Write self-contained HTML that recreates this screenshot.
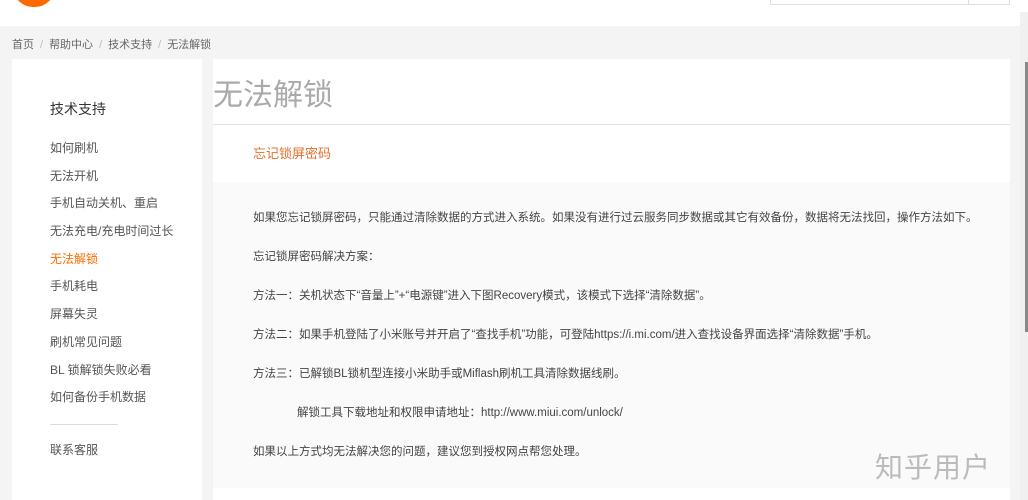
<!DOCTYPE html>
<html><head><meta charset="utf-8"><style>
*{margin:0;padding:0;box-sizing:border-box}
body{width:1028px;height:500px;overflow:hidden;background:#f4f4f4;font-family:"Liberation Sans","Noto Sans CJK SC",sans-serif;position:relative;color:#333}
.hdr{position:absolute;left:0;top:0;width:1028px;height:26px;background:#fff}
.logo{position:absolute;left:13px;top:-20px;width:42px;height:27px;background:#ff6a00;border-radius:0 0 20px 20px}
.search{position:absolute;left:770px;top:-2px;width:240px;height:7px;border:1px solid #ddd;border-top:none}
.search i{position:absolute;left:197px;top:0;width:1px;height:6px;background:#ddd}
.bc{position:absolute;left:12px;top:36px;font-size:11px;color:#666}
.bc span{color:#bbb;margin:0 6px}
.side{position:absolute;left:12px;top:59px;width:190px;height:441px;background:#fff}
.side h3{position:absolute;left:38px;top:40px;font-size:14px;font-weight:normal;color:#333}
.side ul{position:absolute;left:38px;top:80px;list-style:none;font-size:12px;color:#555}
.side li{height:27.7px;line-height:19px}
.side li.on{color:#ff6a00}
.sep{position:absolute;left:50px;top:424px;width:68px;height:1px;background:#ddd}
.contact{position:absolute;left:50px;top:441px;font-size:12px;color:#555}
.main{position:absolute;left:213px;top:59px;width:797px;height:441px;background:#fff}
.title{position:absolute;left:0;top:11px;font-size:30px;color:#aaa;font-weight:normal}
.line{position:absolute;left:0;top:65px;width:797px;height:1px;background:#e0e0e0}
.sub{position:absolute;left:40px;top:84px;font-size:13px;color:#e0702a}
.body{position:absolute;left:0;top:123px;width:797px;height:306px;background:#fafafa}
.body p{position:absolute;left:40px;font-size:11.5px;color:#444;white-space:nowrap}
.wm{position:absolute;left:875px;top:446px;font-size:28px;color:#bbb;letter-spacing:1px}
.sb{position:absolute;left:1020px;top:12px;width:8px;height:488px;background:#f0f0f0}
.sb i{position:absolute;left:5px;top:50px;width:3px;height:270px;background:#888}
</style></head><body>
<div class="hdr"><div class="logo"></div><div class="search"><i></i></div></div>
<div class="bc">首页<span>/</span>帮助中心<span>/</span>技术支持<span>/</span>无法解锁</div>
<div class="side"><h3>技术支持</h3>
<ul><li>如何刷机</li><li>无法开机</li><li>手机自动关机、重启</li><li>无法充电/充电时间过长</li><li class="on">无法解锁</li><li>手机耗电</li><li>屏幕失灵</li><li>刷机常见问题</li><li>BL 锁解锁失败必看</li><li>如何备份手机数据</li></ul>
</div>
<div class="sep"></div><div class="contact">联系客服</div>
<div class="main">
<div class="title">无法解锁</div><div class="line"></div>
<div class="sub">忘记锁屏密码</div>
<div class="body">
<p style="top:27px">如果您忘记锁屏密码，只能通过清除数据的方式进入系统。如果没有进行过云服务同步数据或其它有效备份，数据将无法找回，操作方法如下。</p>
<p style="top:66px">忘记锁屏密码解决方案：</p>
<p style="top:105px">方法一：关机状态下“音量上”+“电源键”进入下图Recovery模式，该模式下选择“清除数据”。</p>
<p style="top:144px">方法二：如果手机登陆了小米账号并开启了“查找手机”功能，可登陆https://i.mi.com/进入查找设备界面选择“清除数据”手机。</p>
<p style="top:183px">方法三：已解锁BL锁机型连接小米助手或Miflash刷机工具清除数据线刷。</p>
<p style="top:222px;left:84px">解锁工具下载地址和权限申请地址：http://www.miui.com/unlock/</p>
<p style="top:261px">如果以上方式均无法解决您的问题，建议您到授权网点帮您处理。</p>
</div>
</div>
<div class="wm">知乎用户</div>
<div class="sb"><i></i></div>
</body></html>
